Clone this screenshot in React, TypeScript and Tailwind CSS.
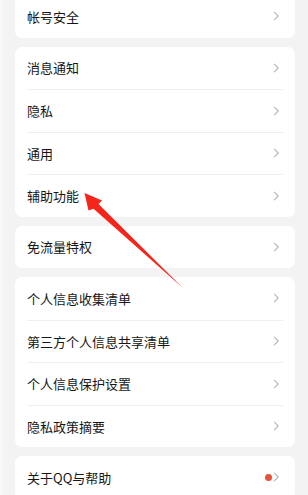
import React from "react";

type Row = { label: string; dot?: boolean };

const groups: Row[][] = [
  [{ label: "帐号安全" }],
  [{ label: "消息通知" }, { label: "隐私" }, { label: "通用" }, { label: "辅助功能" }],
  [{ label: "免流量特权" }],
  [
    { label: "个人信息收集清单" },
    { label: "第三方个人信息共享清单" },
    { label: "个人信息保护设置" },
    { label: "隐私政策摘要" },
  ],
  [{ label: "关于QQ与帮助", dot: true }],
];

function Chevron() {
  return (
    <svg width="7" height="10" viewBox="0 0 7 10" className="shrink-0">
      <polyline points="1.4,1.2 5.2,5 1.4,8.8" fill="none" stroke="#b8b8b8" strokeWidth="1.1" strokeLinecap="round" strokeLinejoin="round" />
    </svg>
  );
}

export default function App() {
  return (
    <div
      className="relative w-[308px] h-[495px] overflow-hidden bg-[#f3f3f3] border-l-[3px] border-[#f8f8f8]"
      style={{ fontFamily: '"Noto Sans CJK SC", "Noto Sans", sans-serif' }}
    >
      <div className="flex flex-col gap-[9px] -mt-[5px] ml-[12px] mr-[13px]">
        {groups.map((g, gi) => (
          <div key={gi} className="bg-white rounded-[7px] flex flex-col">
            {g.map((r, ri) => (
              <div key={ri} className="flex flex-col">
                {ri > 0 && <div className="mx-[12px] h-px bg-[#efefef]" />}
                <div className={`flex items-center pl-[12px] pr-[15px] ${ri > 0 ? "h-[41.5px]" : "h-[42.5px]"}`}>
                  <span className="flex-1 text-[13px] leading-none text-[#161616]">{r.label}</span>
                  {r.dot && <span className="w-[7px] h-[7px] rounded-full bg-[#e9533d] mr-[1px]" />}
                  <Chevron />
                </div>
              </div>
            ))}
          </div>
        ))}
      </div>
      <svg className="absolute inset-0 pointer-events-none" width="308" height="495" viewBox="0 0 308 495">
        <polygon
          points="84.5,193 102,200.5 98.5,204 183.5,288.5 93.5,208.8 88.5,210.5"
          transform="translate(-3 0)"
          fill="#f5251c"
        />
      </svg>
    </div>
  );
}
